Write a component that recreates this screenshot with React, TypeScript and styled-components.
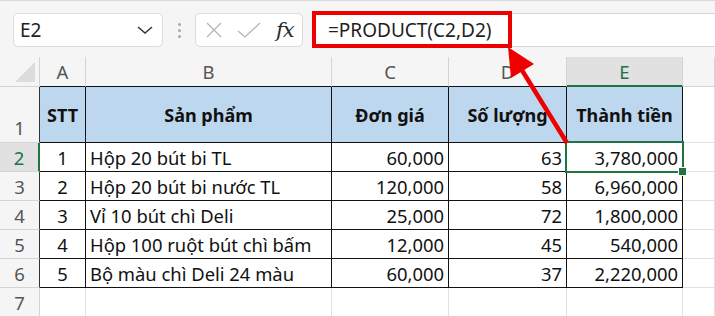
import React from "react";
import styled, { createGlobalStyle, css } from "styled-components";

const GlobalStyle = createGlobalStyle`
  html, body { margin: 0; padding: 0; background: #ffffff; }
  body { font-family: "Noto Sans", "Open Sans", sans-serif; }
  * { box-sizing: border-box; }
`;

const GREEN = "#217346";
const RED = "#ee0000";

const Page = styled.div`
  position: relative;
  width: 715px;
  height: 316px;
  overflow: hidden;
  background: #f5f5f5;
`;

const Toolbar = styled.div`
  display: flex;
  align-items: stretch;
  height: 57px;
  padding: 12px 0 10px 13px;
  border-top: 1px solid #dadada;
  background: #f5f5f5;
`;

const NameBox = styled.div`
  width: 150px;
  display: flex;
  align-items: center;
  justify-content: space-between;
  padding: 0 8px 0 6px;
  background: #fff;
  border: 1px solid #dcdcdc;
  border-radius: 5px;
  font-size: 19px;
  color: #222;
`;

const Grip = styled.div`
  width: 32px;
  display: flex;
  flex-direction: column;
  align-items: center;
  justify-content: center;
  gap: 3px;
  & > span {
    width: 3px;
    height: 3px;
    border-radius: 50%;
    background: #a8a8a8;
  }
`;

const FxBox = styled.div`
  width: 108px;
  display: flex;
  align-items: center;
  padding: 0 6px 0 9px;
  gap: 14px;
  background: #fff;
  border: 1px solid #dcdcdc;
  border-radius: 5px;
`;

const FxText = styled.span`
  font-family: "DejaVu Serif", "Liberation Serif", serif;
  font-style: italic;
  font-size: 21px;
  color: #2a2a2a;
  margin-left: 1px;
  letter-spacing: -1px;
`;

const FormulaInput = styled.div`
  flex: 1;
  margin-left: 10px;
  display: flex;
  align-items: center;
  padding-left: 14px;
  background: #fff;
  border: 1px solid #d6d6d6;
  border-right: none;
  border-radius: 4px 0 0 4px;
  font-size: 19px;
  color: #1e1e1e;
`;

const Sheet = styled.div`
  display: grid;
  grid-template-columns: 40px 46px 246px 117px 118px 116px 1fr;
  grid-template-rows: 30px 56px repeat(6, 29px);
  background: #fff;
  font-size: 18.4px;
  color: #111;
`;

type CellProps = {
  $align?: "left" | "center" | "right";
  $valign?: "center" | "end";
  $bg?: string;
  $right?: string;
  $bottom?: string;
  $bold?: boolean;
  $color?: string;
  $selected?: boolean;
};

const Cell = styled.div<CellProps>`
  position: relative;
  display: flex;
  align-items: ${(p) => (p.$valign === "end" ? "flex-end" : "center")};
  justify-content: ${(p) =>
    p.$align === "left" ? "flex-start" : p.$align === "right" ? "flex-end" : "center"};
  padding: 0 4px ${(p) => (p.$valign === "end" ? "2px" : "0")} 4px;
  background: ${(p) => p.$bg ?? "#fff"};
  border-right: 1px solid ${(p) => p.$right ?? "#e1e1e1"};
  border-bottom: 1px solid ${(p) => p.$bottom ?? "#e1e1e1"};
  font-weight: ${(p) => (p.$bold ? 700 : 400)};
  font-size: ${(p) => (p.$bold ? "18px" : "inherit")};
  color: ${(p) => p.$color ?? "#111"};
  white-space: nowrap;
  ${(p) =>
    p.$selected &&
    css`
      z-index: 2;
      &::after {
        content: "";
        position: absolute;
        left: -2px;
        top: -2px;
        right: -2px;
        bottom: -2px;
        border: 2px solid ${GREEN};
        pointer-events: none;
      }
      &::before {
        content: "";
        position: absolute;
        right: -5px;
        bottom: -5px;
        width: 7px;
        height: 7px;
        background: ${GREEN};
        border: 1px solid #fff;
        z-index: 3;
      }
    `}
`;

const HeaderCell = styled(Cell)<{ $active?: boolean }>`
  background: ${(p) => (p.$active ? "#e1e1e1" : "#f5f5f5")};
  color: ${(p) => (p.$active ? GREEN : "#555")};
  font-size: 18.5px;
`;

const ColHeader = styled(HeaderCell)`
  border-right-color: #d4d4d4;
  ${(p) =>
    p.$active &&
    css`
      border-bottom: 2px solid ${GREEN};
    `}
`;

const RowHeader = styled(HeaderCell)`
  ${(p) =>
    p.$active &&
    css`
      border-right: 2px solid ${GREEN};
    `}
`;

const Corner = styled.div`
  position: relative;
  background: #f5f5f5;
  border-right: 1px solid #d4d4d4;
  border-bottom: 1px solid #d4d4d4;
  &::after {
    content: "";
    position: absolute;
    right: 4px;
    bottom: 4px;
    width: 0;
    height: 0;
    border-left: 20px solid transparent;
    border-bottom: 20px solid #dcdcdc;
  }
`;

const Annotation = styled.div`
  position: absolute;
  left: 312px;
  top: 11px;
  width: 200px;
  height: 37px;
  border: 4px solid ${RED};
  pointer-events: none;
`;

const ArrowLayer = styled.svg`
  position: absolute;
  left: 0;
  top: 0;
  pointer-events: none;
  z-index: 5;
`;

const rows = [
  { stt: "1", name: "Hộp 20 bút bi TL", price: "60,000", qty: "63", total: "3,780,000" },
  { stt: "2", name: "Hộp 20 bút bi nước TL", price: "120,000", qty: "58", total: "6,960,000" },
  { stt: "3", name: "Vỉ 10 bút chì Deli", price: "25,000", qty: "72", total: "1,800,000" },
  { stt: "4", name: "Hộp 100 ruột bút chì bấm", price: "12,000", qty: "45", total: "540,000" },
  { stt: "5", name: "Bộ màu chì Deli 24 màu", price: "60,000", qty: "37", total: "2,220,000" },
];

const headers = ["STT", "Sản phẩm", "Đơn giá", "Số lượng", "Thành tiền"];
const letters = ["A", "B", "C", "D", "E"];
const BLUE = "#bdd7ee";
const DARK = "#111";

export default function App() {
  return (
    <Page>
      <GlobalStyle />
      <Toolbar>
        <NameBox>
          <span>E2</span>
          <svg width="18" height="10" viewBox="0 0 18 10">
            <polyline points="2,2 9,8 16,2" fill="none" stroke="#333" strokeWidth="1.5" />
          </svg>
        </NameBox>
        <Grip>
          <span />
          <span />
          <span />
        </Grip>
        <FxBox>
          <svg width="18" height="16" viewBox="0 0 18 16">
            <path d="M2 1 L16 15 M16 1 L2 15" stroke="#b4b4b4" strokeWidth="1.3" fill="none" />
          </svg>
          <svg width="24" height="17" viewBox="0 0 24 17">
            <polyline points="1,9 8,15 23,1" stroke="#b4b4b4" strokeWidth="1.3" fill="none" />
          </svg>
          <FxText>fx</FxText>
        </FxBox>
        <FormulaInput>=PRODUCT(C2,D2)</FormulaInput>
      </Toolbar>

      <Sheet>
        <Corner />
        {letters.map((l) => (
          <ColHeader key={l} $active={l === "E"} $bottom={DARK}>
            {l}
          </ColHeader>
        ))}
        <ColHeader $bottom="#d4d4d4" />

        <RowHeader $valign="end" $right="#333" $bottom="#d4d4d4">
          1
        </RowHeader>
        {headers.map((h) => (
          <Cell key={h} $bg={BLUE} $bold $right={DARK} $bottom={DARK}>
            {h}
          </Cell>
        ))}
        <Cell />

        {rows.map((r, i) => (
          <React.Fragment key={r.stt}>
            <RowHeader $active={i === 0} $right="#333" $bottom="#d4d4d4">
              {i + 2}
            </RowHeader>
            <Cell $right={DARK} $bottom={DARK}>
              {r.stt}
            </Cell>
            <Cell $align="left" $right={DARK} $bottom={DARK}>
              {r.name}
            </Cell>
            <Cell $align="right" $right={DARK} $bottom={DARK}>
              {r.price}
            </Cell>
            <Cell $align="right" $right={DARK} $bottom={DARK}>
              {r.qty}
            </Cell>
            <Cell $align="right" $right={DARK} $bottom={DARK} $selected={i === 0}>
              {r.total}
            </Cell>
            <Cell />
          </React.Fragment>
        ))}

        <RowHeader $bottom="#d4d4d4" $right="#d4d4d4">
          7
        </RowHeader>
        <Cell />
        <Cell />
        <Cell />
        <Cell />
        <Cell />
        <Cell />
      </Sheet>

      <Annotation />
      <ArrowLayer width="715" height="316" viewBox="0 0 715 316">
        <line x1="567" y1="143" x2="520" y2="67" stroke={RED} strokeWidth="4.5" />
        <polygon points="508,47 534,64 511,78" fill={RED} />
      </ArrowLayer>
    </Page>
  );
}
